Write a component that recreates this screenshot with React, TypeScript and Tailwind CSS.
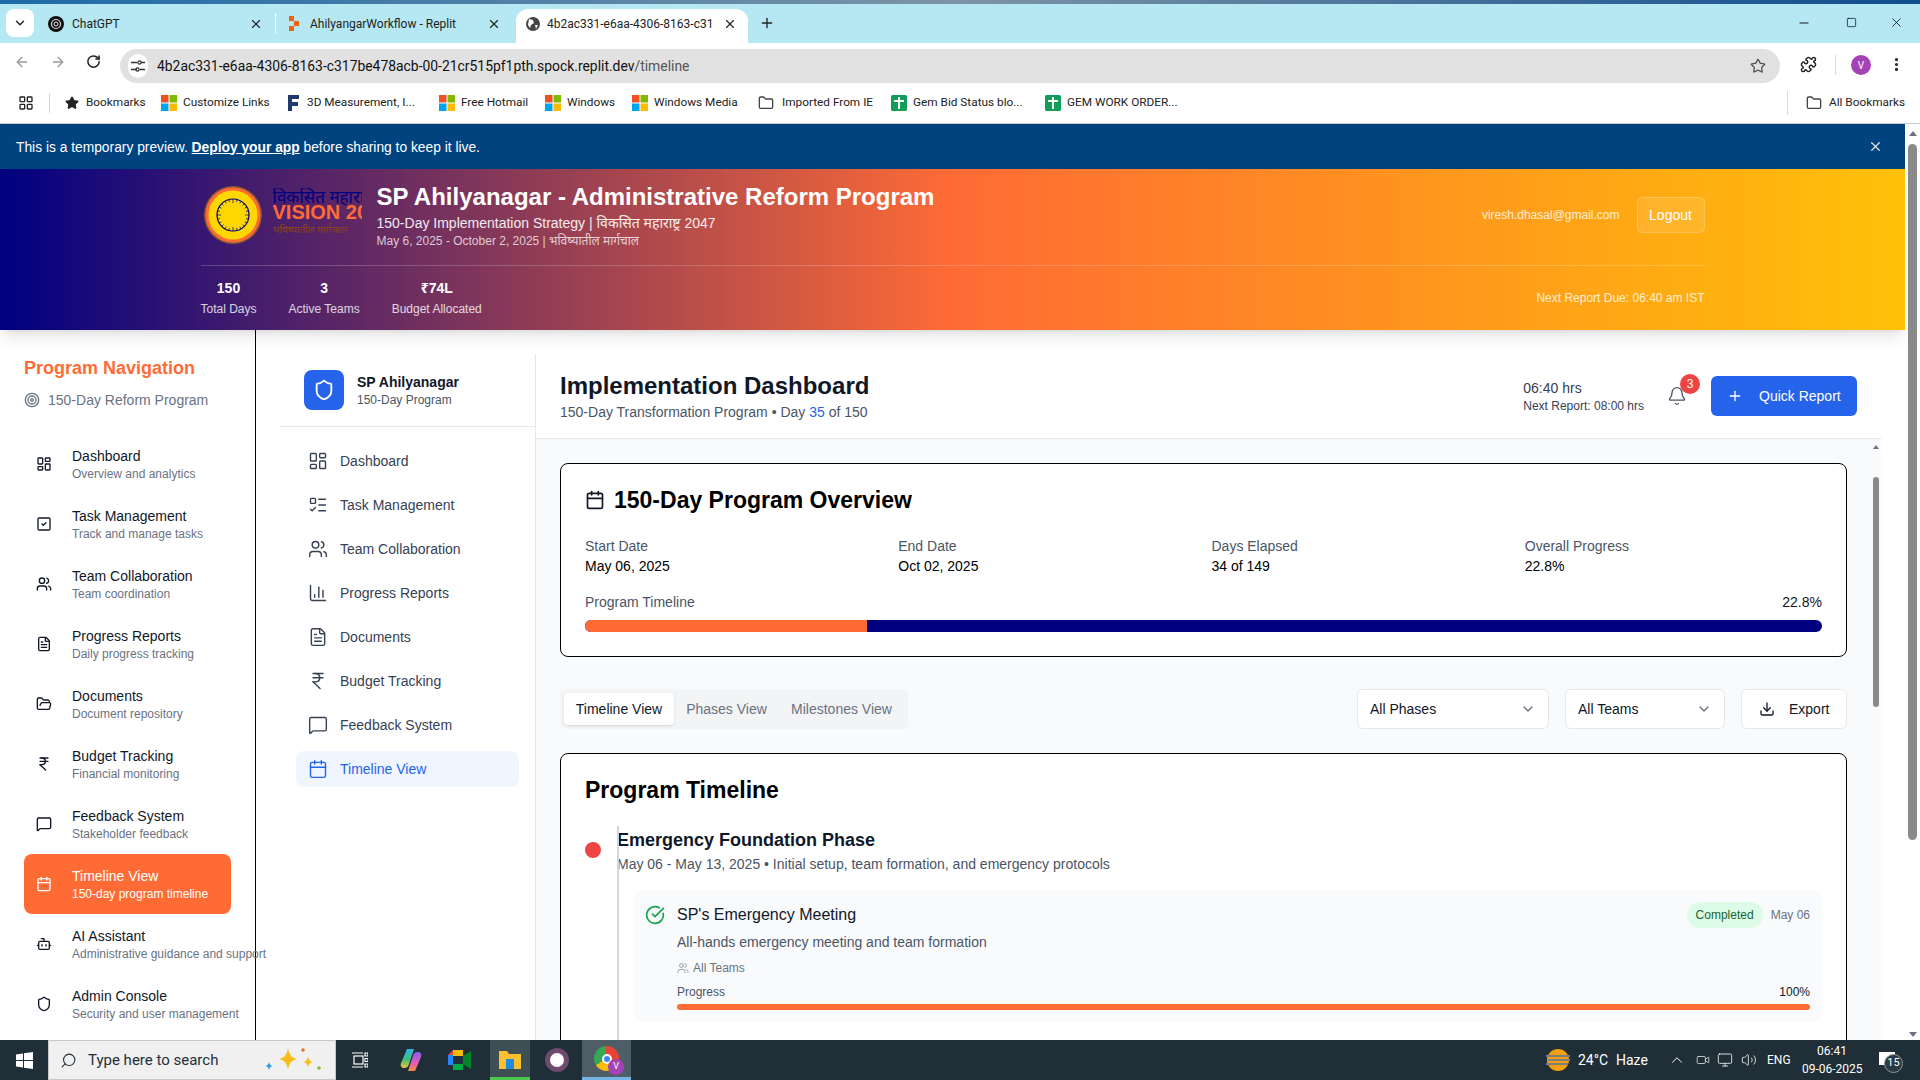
import React from "react";
import {
  LayoutDashboard, SquareCheck, Users, FileText, FolderOpen, IndianRupee, MessageSquare, Calendar, Bot, Shield,
  ListTodo, ChartColumn, Target, Bell, Plus, Download, ChevronDown, CircleCheckBig, X, ArrowLeft, ArrowRight,
  RotateCw, Star, Puzzle, EllipsisVertical, LayoutGrid, Folder, Minus, Square, Search, ChevronUp, Volume2, Monitor, Video,
} from "lucide-react";

const UI = "font-['Roboto','Noto_Sans',sans-serif]";

function MsLogo() {
  return (
    <svg width="16" height="16" viewBox="0 0 16 16" className="shrink-0">
      <rect width="7.5" height="7.5" fill="#f25022" />
      <rect x="8.5" width="7.5" height="7.5" fill="#7fba00" />
      <rect y="8.5" width="7.5" height="7.5" fill="#00a4ef" />
      <rect x="8.5" y="8.5" width="7.5" height="7.5" fill="#ffb900" />
    </svg>
  );
}

function GreenCross() {
  return (
    <svg width="16" height="16" viewBox="0 0 16 16" className="shrink-0">
      <rect width="16" height="16" rx="1.5" fill="#0f9d58" />
      <rect x="7" y="2" width="2" height="12" fill="#fff" />
      <rect x="3" y="5" width="10" height="2" fill="#fff" />
    </svg>
  );
}

function FLogo() {
  return (
    <svg width="11" height="16" viewBox="0 0 11 16" className="shrink-0">
      <path d="M0 0h11v4H4v3h6v4H4v5H0z" fill="#1e3a6e" />
    </svg>
  );
}

function ChromeTabBar() {
  return (
    <div className={`${UI} h-[39px] bg-[#b5e8f3] flex items-end text-[12px] text-[#222] shrink-0`}>
      <div className="w-[28px] h-[28px] ml-[6px] mb-[6px] bg-white rounded-lg flex items-center justify-center">
        <ChevronDown size={14} strokeWidth={2.5} />
      </div>
      <div className="w-[228px] h-[34px] ml-[10px] flex items-center pl-[4px] pb-[4px]">
        <svg width="16" height="16" viewBox="0 0 16 16" className="shrink-0">
          <circle cx="8" cy="8" r="8" fill="#111" />
          <circle cx="8" cy="8" r="4.5" fill="none" stroke="#ddd" strokeWidth="1.2" />
          <circle cx="8" cy="8" r="2" fill="none" stroke="#ddd" strokeWidth="1" />
        </svg>
        <span className="ml-[8px] flex-1">ChatGPT</span>
        <X size={14} className="mr-[9px]" />
      </div>
      <div className="w-px h-[20px] mb-[10px] bg-white ml-[3px]" />
      <div className="w-[240px] h-[34px] flex items-center pl-[12px] pb-[4px]">
        <svg width="12" height="16" viewBox="0 0 12 16" className="shrink-0">
          <path d="M1 0h5v5H1zM6 5h5v5H6zM1 10h5v5H1z" fill="#f26207" />
        </svg>
        <span className="ml-[10px] flex-1 whitespace-nowrap">AhilyangarWorkflow - Replit</span>
        <X size={14} className="mr-[15px]" />
      </div>
      <div className="w-[232px] h-[34px] bg-white rounded-t-xl flex items-center pl-[10px] pb-[4px]">
        <svg width="14" height="14" viewBox="0 0 14 14" className="shrink-0">
          <circle cx="7" cy="7" r="7" fill="#444" />
          <path d="M3 2l4 1 1 3-3 2-1 3-2-3zM9 8l3 0-2 4z" fill="#fff" />
        </svg>
        <span className="ml-[7px] w-[165px] overflow-hidden whitespace-nowrap">4b2ac331-e6aa-4306-8163-c317be478acb</span>
        <X size={14} className="ml-[11px]" />
      </div>
      <Plus size={16} className="ml-[11px] mb-[12px]" />
      <div className="flex-1" />
      <div className="flex items-center mb-[13px] text-black">
        <Minus size={14} strokeWidth={1.5} />
        <Square size={11} strokeWidth={1.5} className="ml-[35px]" />
        <X size={15} strokeWidth={1.2} className="ml-[32px] mr-[16px]" />
      </div>
    </div>
  );
}

function ChromeToolbar() {
  return (
    <div className={`${UI} h-[40px] bg-white flex items-start shrink-0 text-[#333] rounded-tr-lg`}>
      <ArrowLeft size={16} className="ml-[14px] mt-[11px] text-[#999]" />
      <ArrowRight size={16} className="ml-[20px] mt-[11px] text-[#999]" />
      <RotateCw size={15} strokeWidth={2.4} className="ml-[20px] mt-[11px] text-[#222]" />
      <div className="ml-[19px] mt-[6px] w-[1660px] h-[34px] rounded-full bg-[#e1e1e1] flex items-center">
        <div className="w-[20px] h-[24px] ml-[8px] rounded-full bg-white flex items-center justify-center">
          <svg width="14" height="14" viewBox="0 0 14 14" fill="none" stroke="#333" strokeWidth="1.3">
            <path d="M0 3.5h6M0 10.5h6M10 3.5h4M9 10.5h5" />
            <circle cx="8.5" cy="3.5" r="1.6" />
            <circle cx="6.5" cy="10.5" r="1.6" />
          </svg>
        </div>
        <span className="ml-[9px] text-[13.9px] whitespace-nowrap">
          <span className="text-[#111]">4b2ac331-e6aa-4306-8163-c317be478acb-00-21cr515pf1pth.spock.replit.dev</span>
          <span className="text-[#555]">/timeline</span>
        </span>
        <div className="flex-1" />
        <Star size={16} className="mr-[14px] text-[#555]" />
      </div>
      <Puzzle size={17} className="ml-[20px] mt-[13px] text-[#222]" />
      <div className="w-px h-[20px] bg-[#b5e8f3] ml-[18px] mt-[12px]" />
      <div className="w-[20px] h-[20px] ml-[15px] mt-[12px] rounded-full bg-[#a542b8] text-white text-[10px] flex items-center justify-center">V</div>
      <EllipsisVertical size={17} strokeWidth={2.5} className="ml-[17px] mt-[13px] text-[#222]" />
    </div>
  );
}

function Bm({ icon, text, w, gap = 6, ml }: { icon: React.ReactNode; text: string; w: number; gap?: number; ml: number }) {
  return (
    <div className="flex items-center shrink-0" style={{ marginLeft: ml }}>
      {icon}
      <span className="whitespace-nowrap" style={{ marginLeft: gap, width: w }}>{text}</span>
    </div>
  );
}

function Bookmarks() {
  return (
    <div className={`${UI} h-[41px] bg-white border-b border-[#c8cdd0] flex items-center shrink-0 text-[11.8px] text-[#222] pb-px`}>
      <LayoutGrid size={16} className="ml-[18px] text-[#222]" />
      <div className="w-px h-[20px] bg-[#b5e8f3] ml-[15px]" />
      <Bm ml={15} gap={7} w={59} icon={<Star size={14} fill="#222" className="text-[#222] shrink-0" />} text="Bookmarks" />
      <Bm ml={16} w={85} icon={<MsLogo />} text="Customize Links" />
      <Bm ml={20} gap={8} w={109} icon={<FLogo />} text="3D Measurement, I..." />
      <Bm ml={23} w={67} icon={<MsLogo />} text="Free Hotmail" />
      <Bm ml={17} w={49} icon={<MsLogo />} text="Windows" />
      <Bm ml={16} w={85} icon={<MsLogo />} text="Windows Media" />
      <Bm ml={19} gap={8} w={93} icon={<Folder size={16} className="text-[#444] shrink-0" />} text="Imported From IE" />
      <Bm ml={16} w={110} icon={<GreenCross />} text="Gem Bid Status blo..." />
      <Bm ml={22} w={113} icon={<GreenCross />} text="GEM WORK ORDER..." />
      <div className="flex-1" />
      <div className="w-px h-[24px] bg-[#b5e8f3] mr-[18px]" />
      <Folder size={16} className="text-[#444]" />
      <span className="ml-[7px] mr-[14px] w-[77px] whitespace-nowrap">All Bookmarks</span>
    </div>
  );
}

function Logo() {
  const ticks = Array.from({ length: 24 }, (_, i) => (i * 360) / 24);
  return (
    <div className="flex items-center shrink-0">
      <svg width="64" height="64" viewBox="0 0 64 64" className="shrink-0">
        <circle cx="32" cy="32" r="29" fill="#8b5a2b" />
        <circle cx="32" cy="32" r="27.5" fill="#ff6b35" />
        <circle cx="32" cy="32" r="24.5" fill="#ffd700" />
        <circle cx="32" cy="32" r="16" fill="none" stroke="#000080" strokeWidth="1.2" />
        {ticks.map((a) => (
          <line key={a} x1="32" y1="16" x2="32" y2={a % 90 === 0 ? 20 : 18.5} stroke="#000080" strokeWidth="0.7" transform={`rotate(${a} 32 32)`} />
        ))}
      </svg>
      <div className="ml-[8px] self-start mt-[5px] w-[89px] overflow-hidden whitespace-nowrap font-bold">
        <div className="text-[#000080] text-[17px] leading-[18px] font-normal font-['Noto_Sans','Liberation_Sans',sans-serif]">विकसित महाराष्ट्र</div>
        <div className="text-[#ff6b35] text-[20px] leading-[12px] font-['Liberation_Sans',sans-serif]">VISION 2047</div>
        <div className="mt-1 text-[#8b4513] text-[10px] leading-[14px] font-normal font-['Noto_Sans','Liberation_Sans',sans-serif]">भविष्यातील मार्गचाल</div>
      </div>
    </div>
  );
}

function Stat({ v, l }: { v: string; l: string }) {
  return (
    <div className="text-center">
      <div className="text-[14px] leading-6 font-bold text-white">{v}</div>
      <div className="text-xs leading-4 mt-px text-white/80">{l}</div>
    </div>
  );
}

function AppHeader() {
  return (
    <div className="relative z-10 h-[161px] bg-linear-to-r/srgb from-[#000080] via-[#ff6b35] to-[#ffc107] shadow-lg shrink-0">
      <div className="w-[1504px] mx-auto pt-3">
        <div className="flex items-center h-[68px]">
          <Logo />
          <div className="ml-[15px]">
            <div className="text-2xl leading-8 font-bold text-white whitespace-nowrap">SP Ahilyanagar - Administrative Reform Program</div>
            <div className="text-sm leading-5 text-white/90 whitespace-nowrap">150-Day Implementation Strategy | विकसित महाराष्ट्र 2047</div>
            <div className="text-xs leading-4 text-white/75 whitespace-nowrap">May 6, 2025 - October 2, 2025 | भविष्यातील मार्गचाल</div>
          </div>
          <div className="flex-1" />
          <span className="text-xs text-white/80 mr-[17px]">viresh.dhasal@gmail.com</span>
          <button className="h-9 w-[68px] rounded-md border border-white/20 bg-white/10 text-sm text-white">Logout</button>
        </div>
        <div className="mt-4 border-t border-white/20 pt-[10px] flex items-start gap-8">
          <Stat v="150" l="Total Days" />
          <Stat v="3" l="Active Teams" />
          <Stat v="₹74L" l="Budget Allocated" />
          <div className="flex-1" />
          <div className="text-xs text-white/80 mt-[14px]">Next Report Due: 06:40 am IST</div>
        </div>
      </div>
    </div>
  );
}

const nav1 = [
  { I: LayoutDashboard, t: "Dashboard", s: "Overview and analytics" },
  { I: SquareCheck, t: "Task Management", s: "Track and manage tasks" },
  { I: Users, t: "Team Collaboration", s: "Team coordination" },
  { I: FileText, t: "Progress Reports", s: "Daily progress tracking" },
  { I: FolderOpen, t: "Documents", s: "Document repository" },
  { I: IndianRupee, t: "Budget Tracking", s: "Financial monitoring" },
  { I: MessageSquare, t: "Feedback System", s: "Stakeholder feedback" },
  { I: Calendar, t: "Timeline View", s: "150-day program timeline", active: true },
  { I: Bot, t: "AI Assistant", s: "Administrative guidance and support" },
  { I: Shield, t: "Admin Console", s: "Security and user management" },
];

function Sidebar1() {
  return (
    <div className="w-[256px] shrink-0 border-r border-black p-6">
      <div className="text-lg leading-7 font-semibold text-[#ff6b35]">Program Navigation</div>
      <div className="mt-2 mb-6 flex items-center gap-2 text-sm leading-5 text-gray-500">
        <Target size={16} />
        <span>150-Day Reform Program</span>
      </div>
      <div className="flex flex-col">
        {nav1.map(({ I, t, s, active }) => (
          <div key={t} className={`h-[60px] flex items-center pl-3 rounded-lg whitespace-nowrap ${active ? "bg-[#ff6b35] text-white" : "text-gray-900"}`}>
            <I size={16} className="shrink-0" />
            <div className="ml-5">
              <div className="text-sm leading-5 font-normal">{t}</div>
              <div className={`text-xs leading-4 ${active ? "text-white" : "text-gray-500"}`}>{s}</div>
            </div>
          </div>
        ))}
      </div>
    </div>
  );
}

const nav2 = [
  { I: LayoutDashboard, t: "Dashboard" },
  { I: ListTodo, t: "Task Management" },
  { I: Users, t: "Team Collaboration" },
  { I: ChartColumn, t: "Progress Reports" },
  { I: FileText, t: "Documents" },
  { I: IndianRupee, t: "Budget Tracking" },
  { I: MessageSquare, t: "Feedback System" },
  { I: Calendar, t: "Timeline View", active: true },
];

function Sidebar2() {
  return (
    <div className="w-[256px] shrink-0 border-r border-gray-200 bg-white">
      <div className="px-6 py-4 border-b border-gray-200 flex items-center gap-[13px] h-[73px]">
        <div className="w-10 h-10 rounded-lg bg-[#2563eb] flex items-center justify-center text-white">
          <Shield size={22} />
        </div>
        <div>
          <div className="text-sm leading-5 font-semibold text-gray-900">SP Ahilyanagar</div>
          <div className="text-xs leading-4 text-gray-600">150-Day Program</div>
        </div>
      </div>
      <div className="p-4 flex flex-col gap-2">
        {nav2.map(({ I, t, active }) => (
          <div key={t} className={`h-9 px-3 rounded-lg flex items-center gap-3 text-sm ${active ? "bg-[#eff6ff] text-[#2563eb]" : "text-gray-700"}`}>
            <I size={20} strokeWidth={1.7} />
            <span>{t}</span>
          </div>
        ))}
      </div>
    </div>
  );
}

function MainHeader() {
  return (
    <div className="h-[85px] shrink-0 border-b border-gray-200 bg-white px-6 flex items-center">
      <div>
        <div className="text-2xl leading-8 font-bold text-gray-900">Implementation Dashboard</div>
        <div className="text-sm leading-5 text-gray-600">
          150-Day Transformation Program • Day <span className="text-[#2563eb]">35</span> of 150
        </div>
      </div>
      <div className="flex-1" />
      <div className="text-gray-700 mr-[23px]">
        <div className="text-sm leading-5">06:40 hrs</div>
        <div className="text-xs leading-4">Next Report: 08:00 hrs</div>
      </div>
      <div className="relative w-5 h-5 mr-[24px]">
        <Bell size={20} strokeWidth={1.6} className="text-gray-600" />
        <span className="absolute -top-[12px] left-[13px] w-5 h-5 rounded-full bg-[#ef4444] text-white text-xs flex items-center justify-center">3</span>
      </div>
      <button className="h-10 w-[146px] rounded-md bg-[#2563eb] text-white text-sm flex items-center pl-4">
        <Plus size={16} />
        <span className="ml-4">Quick Report</span>
      </button>
    </div>
  );
}

function Overview() {
  const items = [
    ["Start Date", "May 06, 2025"],
    ["End Date", "Oct 02, 2025"],
    ["Days Elapsed", "34 of 149"],
    ["Overall Progress", "22.8%"],
  ];
  return (
    <div className="border border-black rounded-lg bg-white px-6 pt-5 pb-6">
      <div className="flex items-center gap-[9px] h-8">
        <Calendar size={20} className="text-gray-900" />
        <div className="text-[23px] leading-8 font-bold text-black">150-Day Program Overview</div>
      </div>
      <div className="grid grid-cols-4 gap-4 mt-5">
        {items.map(([a, b]) => (
          <div key={a}>
            <div className="text-sm leading-5 text-gray-600">{a}</div>
            <div className="text-sm leading-5 text-black">{b}</div>
          </div>
        ))}
      </div>
      <div className="flex justify-between mt-4 text-sm leading-5">
        <span className="text-gray-600">Program Timeline</span>
        <span className="text-gray-900">22.8%</span>
      </div>
      <div className="mt-2 h-3 rounded-full bg-[#000080] overflow-hidden">
        <div className="h-full bg-[#ff6b35]" style={{ width: "22.8%" }} />
      </div>
    </div>
  );
}

function Controls() {
  return (
    <div className="flex items-center mt-8 h-10">
      <div className="h-10 bg-gray-100 rounded-md p-1 flex items-center text-sm text-gray-500">
        <div className="h-8 w-[110px] bg-white rounded-sm shadow-sm text-gray-900 flex items-center justify-center">Timeline View</div>
        <div className="h-8 w-[105px] flex items-center justify-center">Phases View</div>
        <div className="h-8 w-[125px] flex items-center justify-center">Milestones View</div>
      </div>
      <div className="flex-1" />
      <div className="h-10 w-48 rounded-md border border-gray-200 bg-white px-3 flex items-center justify-between text-sm text-gray-900">
        <span>All Phases</span>
        <ChevronDown size={16} className="text-gray-500" />
      </div>
      <div className="h-10 w-40 ml-4 rounded-md border border-gray-200 bg-white px-3 flex items-center justify-between text-sm text-gray-900">
        <span>All Teams</span>
        <ChevronDown size={16} className="text-gray-500" />
      </div>
      <div className="h-10 w-[106px] ml-4 rounded-md border border-gray-200 bg-white pl-[17px] flex items-center text-sm text-gray-900">
        <Download size={16} />
        <span className="ml-[14px]">Export</span>
      </div>
    </div>
  );
}

function TimelineCard() {
  return (
    <div className="mt-6 border border-black rounded-lg bg-white px-6 pt-5 h-[420px]">
      <div className="text-[23px] leading-8 font-bold text-black">Program Timeline</div>
      <div className="relative mt-5 pl-8">
        <div className="absolute left-[32px] top-0 w-0.5 h-[300px] bg-gray-300" />
        <div className="absolute left-0 top-4 w-4 h-4 rounded-full bg-[#ef4444]" />
        <div className="text-lg leading-7 font-bold text-gray-900">Emergency Foundation Phase</div>
        <div className="text-sm leading-5 text-gray-600">May 06 - May 13, 2025 • Initial setup, team formation, and emergency protocols</div>
        <div className="ml-[17px] mt-4 rounded-lg bg-gray-50 py-3 pr-3 pl-[11px] flex gap-3">
          <CircleCheckBig size={20} className="text-[#16a34a] mt-[3px] shrink-0" />
          <div className="flex-1">
            <div className="flex items-center h-[26px]">
              <span className="text-base text-gray-900">SP's Emergency Meeting</span>
              <div className="flex-1" />
              <span className="rounded-full bg-[#dcfce7] text-[#166534] text-xs leading-4 px-[9px] py-[5px]">Completed</span>
              <span className="ml-2 text-xs text-gray-500">May 06</span>
            </div>
            <div className="mt-1 text-sm leading-5 text-gray-600">All-hands emergency meeting and team formation</div>
            <div className="mt-2 flex items-center gap-1 text-xs leading-4 text-gray-500">
              <Users size={12} className="text-gray-400" />
              <span>All Teams</span>
            </div>
            <div className="mt-2 flex justify-between text-xs leading-4">
              <span className="text-gray-600">Progress</span>
              <span className="text-gray-900">100%</span>
            </div>
            <div className="mt-1 h-1.5 rounded-full bg-[#ff6b35]" />
          </div>
        </div>
      </div>
    </div>
  );
}

function InnerScrollbar() {
  return (
    <div className="w-[10px] shrink-0 bg-gray-50 flex flex-col items-center overflow-hidden">
      <div className="mt-[6px] w-0 h-0 border-x-[3px] border-x-transparent border-b-[4px] border-b-gray-500" />
      <div className="mt-[28px] w-[6px] h-[230px] rounded-full bg-[#8a8a8a]" />
    </div>
  );
}

function PageScrollbar() {
  return (
    <div className="w-[15px] shrink-0 bg-white flex flex-col items-center">
      <div className="mt-[7px] w-0 h-0 border-x-[4px] border-x-transparent border-b-[5px] border-b-gray-500" />
      <div className="mt-[8px] w-[9px] h-[696px] rounded-full bg-[#8a8a8a]" />
      <div className="flex-1" />
      <div className="mb-[3px] w-0 h-0 border-x-[4px] border-x-transparent border-t-[5px] border-t-gray-500" />
    </div>
  );
}

function Taskbar() {
  return (
    <div className={`${UI} h-10 bg-[#1f2e37] shrink-0 flex items-center text-white relative z-20`}>
      <svg width="17" height="17" viewBox="0 0 17 17" className="ml-[16px] shrink-0" fill="#fff">
        <path d="M0 2.4l7-1v6.6H0zM8 1.2l9-1.2v8H8zM0 9h7v6.6l-7-1zM8 9h9v8l-9-1.2z" />
      </svg>
      <div className="ml-[15px] w-[288px] h-10 bg-[#f0f0f0] border border-[#c8c8c8] flex items-center text-[#1f2e37]">
        <Search size={17} className="ml-[11px] -scale-x-100" strokeWidth={1.5} />
        <span className="ml-[11px] text-[15px] whitespace-nowrap">Type here to search</span>
        <svg width="62" height="32" viewBox="0 0 62 32" className="ml-[46px] shrink-0">
          <path d="M24 4c1 7 4 10 9 11-5 1-8 4-9 11-1-7-4-10-9-11 5-1 8-4 9-11z" fill="#fbbc1a" />
          <path d="M44 12c.5 4 2 5.500 5 6-3 .5-4.500 2-5 6-.5-4-2-5.500-5-6 3-.5 4.500-2 5-6z" fill="#fbbc1a" />
          <path d="M5 18c.5 2.500 1.500 3.500 3.500 4-2 .5-3 1.500-3.500 4-.5-2.500-1.500-3.500-3.500-4 2-.5 3-1.500 3.500-4z" fill="#2d9cf0" />
          <circle cx="39" cy="6" r="1.800" fill="#e8703a" />
          <circle cx="55" cy="24" r="1.800" fill="#7bc04b" />
        </svg>
      </div>
      <svg width="16" height="16" viewBox="0 0 16 16" className="ml-[16px] shrink-0" fill="none" stroke="#fff" strokeWidth="1.200">
        <rect x="2" y="4" width="9" height="8" />
        <path d="M0 1h11M0 15h11M13 1h3v3h-3zM13 6.500h3v3h-3zM13 12h3v3h-3z" />
      </svg>
      <svg width="22" height="24" viewBox="0 0 22 24" className="ml-[32px] shrink-0">
        <defs>
          <linearGradient id="cpA" x1="0" y1="0" x2="0" y2="1">
            <stop offset="0" stopColor="#2fb8e6" />
            <stop offset="0.55" stopColor="#3fbf7a" />
            <stop offset="1" stopColor="#f2c230" />
          </linearGradient>
          <linearGradient id="cpB" x1="0" y1="0" x2="0" y2="1">
            <stop offset="0" stopColor="#8a5cf0" />
            <stop offset="0.6" stopColor="#e85cb0" />
            <stop offset="1" stopColor="#f58a3c" />
          </linearGradient>
        </defs>
        <path d="M7 1h7l-5 15c-.8 2.500-2 4-4.500 4C1.500 20 0 18 1 15z" fill="url(#cpA)" />
        <path d="M15 23H8l5-15c.8-2.500 2-4 4.500-4 3 0 4.500 2 3.500 5z" fill="url(#cpB)" />
      </svg>
      <svg width="24" height="22" viewBox="0 0 24 22" className="ml-[26px] shrink-0">
        <path d="M5 1h10v6H5z" fill="#fbbc04" />
        <path d="M0 6h5v10H0z" fill="#2684fc" />
        <path d="M5 15h10v6H5z" fill="#00ac47" />
        <path d="M15 7l8-5v18l-8-5z" fill="#00832d" />
        <path d="M5 1L0 6h5z" fill="#ea4335" />
      </svg>
      <div className="ml-[18px] w-[40px] h-10 bg-[#3f4f56] flex items-center justify-center border-b-[3px] border-[#4cc94c]">
        <svg width="22" height="20" viewBox="0 0 22 20">
          <path d="M0 2h8l2 3h12v15H0z" fill="#fbc02d" />
          <path d="M7 10h8v10H7z" fill="#1e88e5" />
        </svg>
      </div>
      <div className="ml-[15px] w-[24px] h-[24px] rounded-full bg-white border-[5px] border-[#6d4a6e] shrink-0" />
      <div className="ml-[13px] w-[49px] h-10 bg-[#4f5e66] flex items-center justify-center border-b-[3px] border-[#74b5e8]">
        <div className="relative w-[25px] h-[25px] rounded-full bg-[conic-gradient(#ea4335_0_33%,#fbbc04_33%_66%,#34a853_66%)] flex items-center justify-center">
          <div className="w-[10px] h-[10px] rounded-full bg-[#4285f4] border-2 border-white" />
          <span className="absolute -right-[5px] -bottom-[4px] w-[16px] h-[16px] rounded-full bg-[#a542b8] text-[9px] flex items-center justify-center">V</span>
        </div>
      </div>
      <div className="flex-1" />
      <svg width="24" height="24" viewBox="0 0 24 24" className="shrink-0">
        <circle cx="12" cy="12" r="11" fill="#f59e0b" />
        <path d="M0 8h24M2 12h22M0 16h22" stroke="#7a7f85" strokeWidth="1.800" />
      </svg>
      <span className="ml-[8px] w-[30px] text-[14px] whitespace-nowrap">24°C</span>
      <span className="ml-[8px] w-[30px] text-[14px]">Haze</span>
      <ChevronUp size={18} strokeWidth={1.3} className="ml-[22px]" />
      <Video size={14} strokeWidth={1.2} className="ml-[10px]" />
      <Monitor size={16} strokeWidth={1.2} className="ml-[7px]" />
      <Volume2 size={16} strokeWidth={1.2} className="ml-[8px]" />
      <span className="ml-[10px] w-[24px] text-[12px]">ENG</span>
      <div className="ml-[11px] w-[60px] text-[12px] leading-[18px] text-center whitespace-nowrap">
        <div>06:41</div>
        <div>09-06-2025</div>
      </div>
      <div className="relative ml-[17px] mr-[25px] w-[16px] h-[13px] bg-white mb-[4px]">
        <span className="absolute left-[5px] top-[2px] w-[19px] h-[19px] rounded-full bg-[#2a3a44] border border-[#8a949a] text-[11px] flex items-center justify-center">15</span>
      </div>
    </div>
  );
}

export default function App() {
  return (
    <div className="w-[1920px] h-[1080px] overflow-hidden flex flex-col bg-white font-['Liberation_Sans','Noto_Sans',sans-serif]">
      <div className="h-1 shrink-0 bg-linear-to-r/srgb from-[#1c6aa8] via-[#7d94a6] to-[#0e4d8f]" />
      <ChromeTabBar />
      <ChromeToolbar />
      <Bookmarks />
      <div className="flex-1 min-h-0 flex">
        <div className="flex-1 min-w-0 flex flex-col">
          <div className="h-[45px] shrink-0 bg-[#00437f] text-white text-[13.8px] leading-5 flex items-center px-4">
            <span className="mt-[2px]">
              This is a temporary preview. <span className="font-bold underline">Deploy your app</span> before sharing to keep it live.
            </span>
            <div className="flex-1" />
            <X size={15} className="mr-[6px] text-white/85" />
          </div>
          <AppHeader />
          <div className="flex-1 min-h-0 flex">
            <Sidebar1 />
            <div className="flex-1 min-w-0 pl-6 pr-6 pt-6 flex">
              <Sidebar2 />
              <div className="flex-1 min-w-0 flex flex-col">
                <MainHeader />
                <div className="flex-1 min-h-0 flex">
                  <div className="flex-1 min-w-0 bg-gray-50 p-6 overflow-hidden">
                    <Overview />
                    <Controls />
                    <TimelineCard />
                  </div>
                  <InnerScrollbar />
                </div>
              </div>
            </div>
          </div>
        </div>
        <PageScrollbar />
      </div>
      <Taskbar />
    </div>
  );
}
